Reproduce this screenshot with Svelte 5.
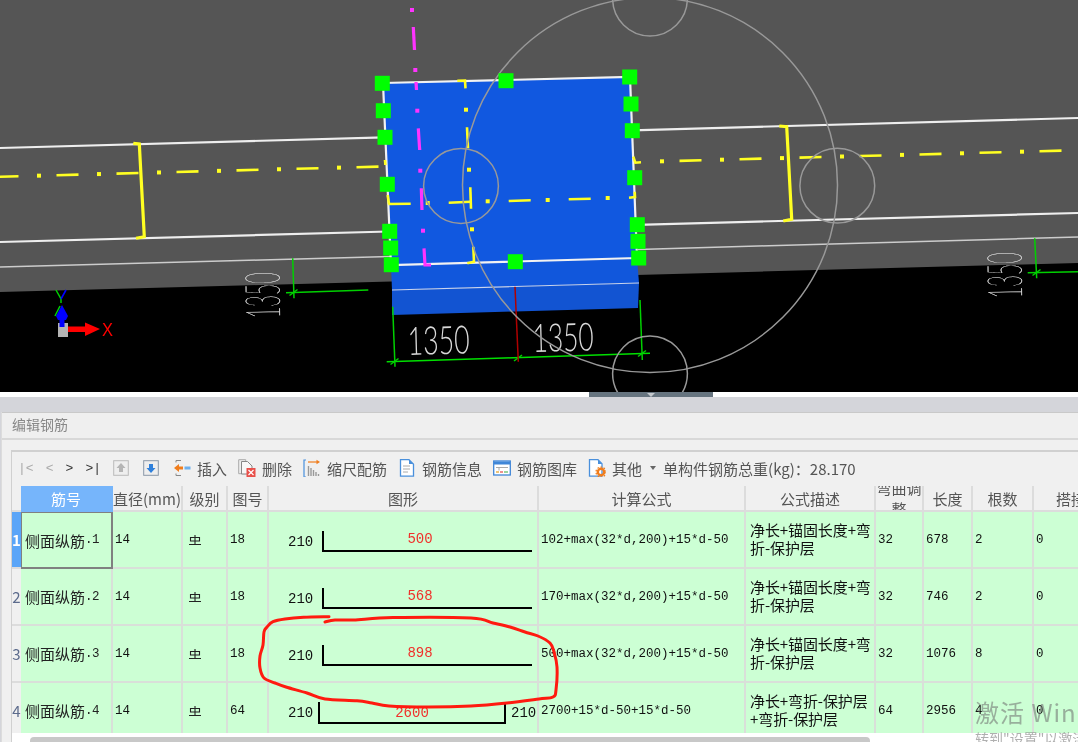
<script>
  // yellow axis dashes: dot + 22px dash every 60px
  function axisRun(from, count, y0, x0) {
    const dots = [], dashes = []
    for (let i = 0; i < count; i++) {
      const x = from + i * 60
      dots.push({ x, y: y0 - 0.0267 * (x - x0) })
      const a = x + 17.5
      dashes.push({ x1: a, y1: y0 - 0.0267 * (a - x0), x2: a + 22, y2: y0 - 0.0267 * (a + 22 - x0) })
    }
    return { dots, dashes }
  }
  const leftAxis = axisRun(-21, 7, 176.7, 0)
  const rightAxis = axisRun(662, 7, 161.3, 662)
  const midAxis = [
    [388.3, 204, 410.7, 203.7], [448.7, 202.7, 470.7, 201.7], [508.7, 201, 530.7, 200.3], [568.7, 199.3, 590.7, 198.7]
  ]
  const midDots = [[427.7, 203], [487.7, 201.3], [547.7, 200], [607.7, 198], [466, 109.7], [469, 169.7], [472, 229.3]]
  const columnDashes = [[467, 127.3, 468, 148.3], [470.3, 187.3, 471, 208.7]]

  const magenta = [[413.3, 27, 414.5, 50], [416, 82, 416.5, 90], [418.3, 128.3, 419.7, 150], [421.3, 188.3, 422, 210]]
  const magentaDots = [[412, 10], [415.3, 70], [417.3, 110.7], [420.3, 170.7], [423, 230.7]]

  const handles = [
    [382.3, 83.3], [383.3, 110.7], [385, 137.3], [387.3, 184.3], [389.7, 231.3], [390.7, 248], [391.3, 264.7],
    [506, 80.7], [629.7, 77], [631, 104], [632.3, 130.7], [634.7, 177.7], [637.3, 224.7], [638, 241.3], [638.7, 258], [515.3, 261.7]
  ]
  const circles = [[461, 186], [837.3, 185.7], [650, -1.5], [650, 373.5]]
  const crosses = [[394.5, 361.5], [518, 358], [642, 353.5], [293.5, 292.5], [1036.5, 272.5]]

  // pen loop, smoothed through the traced points
  const loop = [
    [329, 616.7], [303.6, 617.3], [285, 619], [273, 621.7], [267, 627], [264, 632], [263, 645], [260, 656], [260, 668], [264, 678],
    [275, 683], [286, 687], [307, 693], [325, 699], [357, 700.7], [372, 703], [389, 706], [428.6, 707], [471, 706], [507, 703],
    [539, 699], [553, 697], [556, 690], [557, 667], [554, 652], [550, 643], [538, 636], [525, 632], [510, 627], [493, 623],
    [471, 618], [393, 617.5], [353.6, 620], [335, 620], [325, 622]
  ]
  function smooth(pts) {
    let d = `M${pts[0][0]} ${pts[0][1]}`
    for (let i = 0; i < pts.length - 1; i++) {
      const p0 = pts[i - 1] || pts[i], p1 = pts[i], p2 = pts[i + 1], p3 = pts[i + 2] || p2
      const c1 = [p1[0] + (p2[0] - p0[0]) / 6, p1[1] + (p2[1] - p0[1]) / 6]
      const c2 = [p2[0] - (p3[0] - p1[0]) / 6, p2[1] - (p3[1] - p1[1]) / 6]
      d += ` C${c1[0]} ${c1[1]} ${c2[0]} ${c2[1]} ${p2[0]} ${p2[1]}`
    }
    return d
  }
  const loopPath = smooth(loop)

  const rows = [
    { n: 1, no: '.1', fig: 18, shape: 'hook', mid: '500', formula: '102+max(32*d,200)+15*d-50', desc: ['净长+锚固长度+弯', '折-保护层'], adj: 32, len: 678, count: 2 },
    { n: 2, no: '.2', fig: 18, shape: 'hook', mid: '568', formula: '170+max(32*d,200)+15*d-50', desc: ['净长+锚固长度+弯', '折-保护层'], adj: 32, len: 746, count: 2 },
    { n: 3, no: '.3', fig: 18, shape: 'hook', mid: '898', formula: '500+max(32*d,200)+15*d-50', desc: ['净长+锚固长度+弯', '折-保护层'], adj: 32, len: 1076, count: 8 },
    { n: 4, no: '.4', fig: 64, shape: 'tray', mid: '2600', formula: '2700+15*d-50+15*d-50', desc: ['净长+弯折-保护层', '+弯折-保护层'], adj: 64, len: 2956, count: 4 }
  ]
  const heads = ['筋号', '直径(mm)', '级别', '图号', '图形', '计算公式', '公式描述', '弯曲调整', '长度', '根数', '搭接']
</script>

<div class="page">
  <svg class="canvas" viewBox="0 0 1078 392" width="1078" height="392">
    <rect width="1078" height="392" fill="#000" />
    <polygon points="0,0 1078,0 1078,263 0,292" fill="#555" />

    <!-- beam edges -->
    <g stroke="#eee" stroke-width="2.2">
      <line x1="0" y1="148" x2="384" y2="137.3" />
      <line x1="632" y1="130.3" x2="1078" y2="118" />
      <line x1="0" y1="242" x2="389" y2="231.5" />
      <line x1="637" y1="224.8" x2="1078" y2="213" />
    </g>
    <g stroke="#ccc" stroke-width="1.5">
      <line x1="0" y1="267" x2="390" y2="256.5" />
      <line x1="638" y1="249.5" x2="1078" y2="237" />
    </g>

    <!-- column -->
    <polygon points="391,265 637,258 639,283 392,290" fill="#1157dc" />
    <polygon points="392,290 639,283 638,308 392,315" fill="#1254d2" />
    <polygon points="383,83 630,77 637,258 391,265" fill="#1158e0" />
    <line x1="392" y1="290" x2="639" y2="283" stroke="#c8d4f0" stroke-width="1.2" />
    <polygon points="383,83 630,77 637,258 391,265" fill="none" stroke="#f2f2f2" stroke-width="2.2" />

    <!-- dimensions -->
    <g stroke="#00d000" stroke-width="1.5" fill="none">
      <line x1="386.7" y1="361.7" x2="650" y2="353.3" stroke="#00e000" />
      <line x1="392.7" y1="306.7" x2="395" y2="366.7" />
      <line x1="640" y1="300" x2="642.3" y2="360" />
      <line x1="292.7" y1="258.3" x2="294" y2="298.3" />
      <line x1="286" y1="292.7" x2="368.3" y2="290" />
      <line x1="1034.7" y1="238.3" x2="1036.7" y2="278.3" />
      <line x1="1027.7" y1="272.7" x2="1078" y2="271.7" />
      {#each crosses as [x, y]}
        <line x1={x - 4} y1={y + 3} x2={x + 4} y2={y - 3} />
      {/each}
    </g>
    <line x1="515" y1="286.7" x2="518.3" y2="361.7" stroke="#b00000" stroke-width="1.5" />

    <g class="cad">
      <text x="0" y="0" transform="translate(408 355) rotate(-1.6)" textLength="62" lengthAdjust="spacingAndGlyphs">1350</text>
      <text x="0" y="0" transform="translate(533 352) rotate(-1.6)" textLength="61" lengthAdjust="spacingAndGlyphs">1350</text>
      <text class="side" x="0" y="0" transform="translate(280 318) rotate(-91)" textLength="46" lengthAdjust="spacingAndGlyphs">1350</text>
      <text class="side" x="0" y="0" transform="translate(1022 298) rotate(-91)" textLength="46" lengthAdjust="spacingAndGlyphs">1350</text>
    </g>

    <!-- axis lines -->
    <g stroke="#ffff22" stroke-width="2.6" fill="none">
      {#each [...leftAxis.dashes, ...rightAxis.dashes] as d}
        <line x1={d.x1} y1={d.y1} x2={d.x2} y2={d.y2} />
      {/each}
      {#each midAxis as [x1, y1, x2, y2]}
        <line {x1} {y1} {x2} {y2} />
      {/each}
      {#each columnDashes as [x1, y1, x2, y2]}
        <line {x1} {y1} {x2} {y2} />
      {/each}
      <polyline points="457.3,80.7 465,80.5 465.5,88.3" />
      <polyline points="473.3,246.7 474,261.7 467.3,263.3" />
      <polyline points="387.7,195 389,204" />
      <polyline points="385,160 385.4,165" />
      <polyline points="629,197.7 635,197 634.7,191.7" />
      <polyline points="633.3,156.7 635.3,162.7 641,162.3" />
      <polyline stroke-width="3.2" points="133.3,143.3 139.3,144 144.3,236.7 136,238.3" />
      <polyline stroke-width="3.2" points="779.3,126 786.7,126.7 791.7,219.3 783.3,221" />
    </g>
    <g fill="#ffff22">
      {#each [...leftAxis.dots, ...rightAxis.dots] as d}
        <rect x={d.x - 2} y={d.y - 2} width="4" height="4" />
      {/each}
      {#each midDots as [x, y]}
        <rect x={x - 2} y={y - 2} width="4" height="4" />
      {/each}
    </g>

    <!-- magenta centre line -->
    <g stroke="#ff33ff" stroke-width="3.2" fill="none">
      {#each magenta as [x1, y1, x2, y2]}
        <line {x1} {y1} {x2} {y2} />
      {/each}
      <polyline points="424,248.3 425,265 431,265" />
    </g>
    <g fill="#ff33ff">
      {#each magentaDots as [x, y]}
        <rect x={x - 2} y={y - 2} width="4" height="4" />
      {/each}
    </g>

    <!-- grip circles -->
    <g fill="none" stroke="#999" stroke-width="1.5">
      <circle cx="650" cy="185" r="187.5" />
      {#each circles as [cx, cy]}
        <circle {cx} {cy} r="37.4" />
      {/each}
    </g>

    {#each handles as [x, y]}
      <rect x={x - 7.5} y={y - 7.5} width="15" height="15" fill="#00ff00" />
    {/each}

    <!-- axis widget -->
    <rect x="58" y="323" width="10" height="14" fill="#b4b4b4" />
    <rect x="68" y="326.5" width="18" height="5.5" fill="#ff0000" />
    <polygon points="85,322.5 100,329 85,336" fill="#ff0000" />
    <text class="axis-x" x="102" y="336" textLength="11" lengthAdjust="spacingAndGlyphs">X</text>
    <g stroke="#00d000" stroke-width="1.5" fill="none">
      <polyline points="56,290 61,299 61,303" />
      <line x1="60" y1="306" x2="55" y2="316" />
    </g>
    <polyline points="61,299 66,290" fill="none" stroke="#0000ff" stroke-width="1.6" />
    <rect x="59.5" y="314" width="5" height="13" fill="#0000ff" />
    <polygon points="62,305 56,316 58,320 66,320 68,316" fill="#0000ff" />
  </svg>

  <div class="split"><span class="grip"><i class="tri"></i></span></div>

  <div class="panel">
    <div class="title">编辑钢筋</div>
    <div class="box">
      <div class="toolbar">
        <div class="nav">
          <span class="off">|&lt;</span><span class="off">&lt;</span><span>&gt;</span><span>&gt;|</span>
        </div>
        <svg class="ic move" viewBox="0 0 16 16">
          <rect x=".7" y=".7" width="14.6" height="14.6" fill="#eee" stroke="#bbb" />
          <path d="M8 3l4.5 5H10v4H6V8H3.500z" fill="#b5b5b5" />
        </svg>
        <svg class="ic move" viewBox="0 0 16 16">
          <rect x=".7" y=".7" width="14.6" height="14.6" fill="#eee" stroke="#8a98a8" />
          <path d="M8 13L3.500 8H6V4h4v4h2.500z" fill="#2f80dc" />
        </svg>
        <div class="tool">
          <svg class="ic" viewBox="0 0 18 18">
            <path d="M3 1.500h5M3 1.500v2M3 16.500h5M3 16.500v-2" stroke="#888" fill="none" />
            <path d="M1 9l5-4v2.500h4v3H6V13z" fill="#f07d1c" />
            <rect x="11.500" y="7.500" width="6" height="3" fill="#6fb0ec" />
          </svg>
          插入
        </div>
        <div class="tool">
          <svg class="ic" viewBox="0 0 18 18">
            <path d="M.7 .7h7v14h-7z" fill="#eee" stroke="#aaa" />
            <path d="M3.500 2.500h6l4.500 4.500v8h-10.500z" fill="#f8f8f8" stroke="#888" />
            <rect x="8.500" y="9" width="9" height="9" fill="#e8504a" />
            <path d="M10.500 11l5 5M15.500 11l-5 5" stroke="#fff" stroke-width="1.200" />
          </svg>
          删除
        </div>
        <div class="tool">
          <svg class="ic" viewBox="0 0 18 18">
            <path d="M5 3h9" stroke="#f07d1c" stroke-width="1.200" />
            <path d="M13.500 .7l3.500 2.300-3.500 2.300z" fill="#f07d1c" />
            <path d="M3 1h-2v17h2" stroke="#4a90dc" fill="none" stroke-width="1.200" />
            <path d="M5.500 7v10M8 9v8M10.500 11v6M13 13v4M15.500 15v2" stroke="#999" stroke-width="1.400" />
          </svg>
          缩尺配筋
        </div>
        <div class="tool">
          <svg class="ic" viewBox="0 0 18 18">
            <path d="M2.500 .7h8.500l4.500 4.500v12H2.500z" fill="#fff" stroke="#4a90dc" stroke-width="1.300" />
            <path d="M11 1v4h4.500z" fill="#4a90dc" />
            <path d="M5 7h7M5 10h7M5 13h5" stroke="#aaa" />
          </svg>
          钢筋信息
        </div>
        <div class="tool">
          <svg class="ic" viewBox="0 0 18 18">
            <rect x=".7" y="2" width="16.600" height="14" fill="#fff" stroke="#3f86d8" stroke-width="1.300" />
            <rect x="1" y="2.500" width="16" height="3" fill="#3f86d8" />
            <path d="M3 8.500h3v3M6 8.500h9" stroke="#aaa" fill="none" />
            <path d="M3 13h3" stroke="#e8b04a" stroke-width="1.500" />
            <path d="M7 13h3" stroke="#e86a6a" stroke-width="1.500" />
            <path d="M11 13h4" stroke="#7cc47c" stroke-width="1.500" />
          </svg>
          钢筋图库
        </div>
        <div class="tool">
          <svg class="ic" viewBox="0 0 18 18">
            <path d="M1.500 .7h8.500l4 4v12.500H1.500z" fill="#fff" stroke="#4a90dc" stroke-width="1.300" />
            <path d="M10 1v4h4z" fill="#4a90dc" />
            <circle cx="13" cy="13" r="3.200" fill="none" stroke="#f07d1c" stroke-width="2.400" />
            <circle cx="13" cy="13" r="5" fill="none" stroke="#f07d1c" stroke-width="1.200" stroke-dasharray="1.600 1.600" />
          </svg>
          其他
          <span class="caret"></span>
        </div>
        <div class="total">单构件钢筋总重(kg)：28.170</div>
      </div>

      <div class="grid">
        <div class="head corner"></div>
        {#each heads as h, i}
          <div class="head" class:active={i === 0}><span>{h}</span></div>
        {/each}

        {#each rows as r, i}
          <div class="num" class:active={i === 0}>{r.n}</div>
          <div class="cell name" class:current={i === 0}>侧面纵筋<span class="latin no">{r.no}</span></div>
          <div class="cell latin">14</div>
          <div class="cell grade">
            <svg viewBox="0 0 12 12" width="12" height="12">
              <path d="M1.500 7V3.500h9V7zM6 1v9.500M0 10.500h12" fill="none" stroke="#222" stroke-width="1.100" />
            </svg>
          </div>
          <div class="cell latin">{r.fig}</div>
          <div class="cell shape">
            <span class="dim">210</span>
            {#if r.shape === 'hook'}
              <div class="hook"><span class="mid">{r.mid}</span></div>
            {:else}
              <div class="tray"><span class="mid">{r.mid}</span></div>
              <span class="dim">210</span>
            {/if}
          </div>
          <div class="cell latin formula">{r.formula}</div>
          <div class="cell desc">{r.desc[0]}<br />{r.desc[1]}</div>
          <div class="cell latin">{r.adj}</div>
          <div class="cell latin">{r.len}</div>
          <div class="cell latin">{r.count}</div>
          <div class="cell latin">0</div>
        {/each}
      </div>
      <div class="scroll"><span class="thumb"></span></div>
    </div>
  </div>

  <!-- pen mark drawn over the table -->
  <svg class="mark" viewBox="0 0 1078 742" width="1078" height="742">
    <path d={loopPath} fill="none" stroke="#ff1a10" stroke-width="3" stroke-linejoin="round" stroke-linecap="round" />
  </svg>

  <div class="activate">
    <div class="big">激活 Windows</div>
    <div class="small">转到"设置"以激活 Windows。</div>
  </div>
</div>

<style>
  :global(body) {
    margin: 0;
    overflow: hidden;
  }
  .page {
    position: relative;
    width: 1078px;
    height: 742px;
    overflow: hidden;
    background: #d4d5da;
    font-family: "Noto Sans CJK SC", "Liberation Sans", sans-serif;
    filter: blur(0.4px);
  }
  .canvas {
    display: block;
  }
  .cad text {
    font-family: "Lato", "Liberation Sans", sans-serif;
    font-weight: 300;
    font-size: 39px;
    fill: #d8d8d8;
  }
  .cad text.side {
    font-size: 48px;
    font-weight: 100;
    stroke: #d8d8d8;
    stroke-width: 0.4px;
  }
  .axis-x {
    font-family: "Liberation Sans", sans-serif;
    font-size: 19px;
    fill: #ff0000;
  }
  .split {
    height: 5px;
    background: #fff;
    display: flex;
    padding-left: 589px;
  }
  .grip {
    display: flex;
    justify-content: center;
    width: 124px;
    height: 5px;
    background: #66747f;
  }
  .tri {
    width: 0;
    height: 0;
    margin-top: 1px;
    border: 4px solid transparent;
    border-top: 4px solid #c4c8cc;
    border-bottom: 0;
  }
  .panel {
    margin-top: 15px;
    margin-left: 1px;
    height: 330px;
    background: #f0f0f0;
    border-left: 1px solid #dcdcdc;
  }
  .title {
    line-height: 23px;
    padding-left: 10px;
    font-size: 14px;
    color: #888;
    background: #efefef;
    border-top: 1px solid #c9c9c9;
    border-bottom: 2px solid #d8d8d8;
    box-sizing: border-box;
    height: 28px;
  }
  .box {
    margin: 10px 0 0 9px;
    border-top: 2px solid #d0d0d0;
    border-left: 1px solid #d0d0d0;
    width: 1200px;
    height: 292px;
    overflow: hidden;
    background: #fff;
  }
  .toolbar {
    height: 34px;
    display: flex;
    align-items: center;
    background: #f0f0f0;
    font-size: 15px;
    color: #555;
    padding-bottom: 2px;
    box-sizing: border-box;
    white-space: nowrap;
  }
  .nav {
    display: flex;
    width: 94px;
    padding-left: 6px;
    box-sizing: border-box;
    justify-content: space-between;
    font-family: "Liberation Mono", monospace;
    font-size: 13px;
    color: #333;
    padding-right: 5px;
  }
  .off {
    color: #aaa;
  }
  .ic {
    width: 18px;
    height: 18px;
    flex: none;
  }
  .move {
    width: 16px;
    height: 16px;
    margin-left: 7px;
    margin-right: 7px;
  }
  .tool {
    display: flex;
    align-items: center;
    gap: 6px;
    margin-right: 11px;
  }
  .move + .tool {
    margin-left: 7px;
  }
  .caret {
    width: 0;
    height: 0;
    margin-left: 2px;
    border: 3.500px solid transparent;
    border-top: 4px solid #666;
    border-bottom: 0;
  }
  .total {
    margin-left: -4px;
  }
  .grid {
    display: grid;
    grid-template-columns: 9px 92px 70px 45px 41px 270px 207px 130px 48px 49px 61px 76px;
    grid-template-rows: 26px 57px 57px 57px 57px;
    height: 247px;
    overflow: hidden;
    background: #ccffd4;
  }
  .head {
    display: flex;
    align-items: center;
    justify-content: center;
    overflow: hidden;
    text-align: center;
    font-size: 15px;
    line-height: 21px;
    color: #555;
    background: #f0f0f0;
    border-right: 2px solid #dcdcdc;
    border-bottom: 2px solid #dcdcdc;
    box-sizing: border-box;
  }
  .head.active {
    background: #76b5fb;
    color: #fff;
    border-color: #76b5fb;
  }
  .corner {
    border-right: 0;
  }
  .num {
    display: flex;
    align-items: center;
    justify-content: center;
    font-size: 15px;
    color: #5c6b8c;
    background: #f0f0f0;
    box-sizing: border-box;
    border-bottom: 2px solid #dcdcdc;
  }
  .num.active {
    background: #5aa5f8;
    color: #fff;
    font-weight: 700;
  }
  .cell {
    display: flex;
    align-items: center;
    padding-left: 2px;
    box-sizing: border-box;
    overflow: hidden;
    white-space: nowrap;
    font-size: 15px;
    color: #111;
    border-right: 2px solid #d9dfd9;
    border-bottom: 2px solid #d9dfd9;
  }
  .latin {
    font-family: "Liberation Mono", "Noto Sans CJK SC", monospace;
    font-size: 12.500px;
  }
  .name {
    color: #222;
    padding-left: 4px;
  }
  .no {
    letter-spacing: -0.500px;
  }
  .current {
    border: 2px solid #808080;
    border-left-width: 1px;
    border-top-width: 1px;
    padding-left: 3px;
  }
  .grade {
    padding-left: 6px;
  }
  .shape {
    padding-left: 19px;
    gap: 8px;
    padding-top: 4px;
  }
  .dim {
    width: 26px;
    flex: none;
    font-family: "Liberation Mono", monospace;
    font-size: 14px;
  }
  .mid {
    font-family: "Liberation Mono", monospace;
    font-size: 14px;
    color: #f0302a;
  }
  .hook {
    width: 210px;
    height: 21px;
    margin-top: -1px;
    padding-right: 16px;
    box-sizing: border-box;
    border-left: 2px solid #000;
    border-bottom: 2px solid #000;
    text-align: center;
    line-height: 12px;
  }
  .tray {
    width: 188px;
    height: 22px;
    margin: 0 -3px 0 -4px;
    flex: none;
    box-sizing: border-box;
    border: 2px solid #000;
    border-top: 0;
    text-align: center;
    line-height: 18px;
  }
  .formula {
    padding-left: 2px;
  }
  .desc {
    display: block;
    padding-left: 4px;
    padding-top: 9px;
    line-height: 17.500px;
    letter-spacing: -0.100px;
  }
  .scroll {
    height: 9px;
    background: #fff;
    position: relative;
    display: flex;
    padding: 4px 0 0 18px;
    box-sizing: border-box;
  }
  .thumb {
    display: block;
    width: 840px;
    height: 5px;
    background: #c8c8c8;
    border-radius: 4px 4px 0 0;
  }
  .mark {
    position: absolute;
    left: 0;
    top: 0;
    pointer-events: none;
  }
  .activate {
    position: absolute;
    left: 975px;
    top: 695px;
    white-space: nowrap;
    color: rgba(110, 110, 110, 0.55);
  }
  .big {
    font-size: 24px;
    line-height: 34px;
    letter-spacing: 1px;
  }
  .small {
    font-size: 14px;
    line-height: 18px;
  }
</style>
